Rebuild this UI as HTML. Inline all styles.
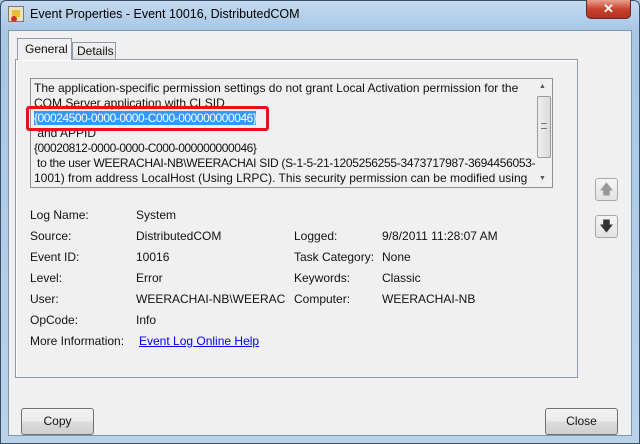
<!DOCTYPE html>
<html><head><style>
*{margin:0;padding:0;box-sizing:border-box}
body{width:640px;height:444px;overflow:hidden;background:#a9c6e2;font-family:"Liberation Sans",sans-serif;font-size:12px;color:#111;position:relative}
.frame{position:absolute;left:0;top:0;width:640px;height:444px;border:1px solid #3a4f66;border-radius:6px 6px 0 0;background:linear-gradient(180deg,#c3daf0 0,#a8c7e5 30px,#b9d2ea 100%)}
.abs{position:absolute;white-space:nowrap}
.client{position:absolute;left:8px;top:30px;width:624px;height:406px;background:#f0f0f0;border:1px solid #7d95ad}
.panel{position:absolute;left:15px;top:59px;width:563px;height:319px;border:1px solid #8e9aa6;background:#f0f0f0;box-shadow:inset 1px 1px 0 #fff}
.tab{position:absolute;border:1px solid #8e9aa6;border-bottom:none;background:linear-gradient(#f3f3f3,#e3e3e3)}
.box{position:absolute;left:30px;top:78px;width:523px;height:110px;border:1px solid #8f8f8f;background:#f0f0f0;overflow:hidden}
.sb{position:absolute;left:536px;top:79px;width:16px;height:108px;background:#f0f0f0}
.btn{position:absolute;border:1px solid #707070;border-radius:3px;background:linear-gradient(#f2f2f2 0,#ebebeb 50%,#dddddd 51%,#cfcfcf 100%);text-align:center;line-height:25px}
.ab{position:absolute;left:595px;width:23px;height:23px;border:1px solid #a8a8a8;border-radius:3px;background:linear-gradient(#f5f5f5,#e2e2e2)}
.g{letter-spacing:-0.45px}
</style></head><body>
<div class="frame"></div>
<div class="abs" style="left:8px;top:6px;width:16px;height:16px;background:#e8e0c8;border:1px solid #8a7a5a"><div style="position:absolute;left:3px;top:3px;width:8px;height:7px;background:#e8c030"></div><div style="position:absolute;left:2px;top:9px;width:6px;height:6px;border-radius:50%;background:#d03030"></div></div>
<div class="abs" style="left:30px;top:7px;font-size:12.5px;color:#000">Event Properties - Event 10016, DistributedCOM</div>
<div class="abs" style="left:586px;top:0;width:45px;height:19px;border:1px solid #5a2a2a;border-top:none;border-radius:0 0 5px 5px;background:linear-gradient(#e8a090,#c84430 50%,#b03020);color:#fff;text-align:center;font-weight:bold;font-size:13px;line-height:18px">✕</div>
<div class="client"></div>
<div class="panel"></div>
<div class="tab" style="left:17px;top:38px;width:55px;height:22px;background:#f0f0f0;z-index:2"><span class="abs" style="left:7px;top:3px">General</span></div>
<div class="tab" style="left:72px;top:42px;width:44px;height:17px"><span class="abs" style="left:4px;top:1px">Details</span></div>
<div class="box"></div>
<div class="abs" style="left:31px;top:79px;width:505px;height:108px;overflow:hidden">
<div class="abs" style="left:3px;top:2px;line-height:15px;color:#111">The application-specific permission settings do not grant Local Activation permission for the<br>COM Server application with CLSID<br><span class="g" style="background:#3399ff;color:#fff">{00024500-0000-0000-C000-000000000046}</span><br>&nbsp;and APPID<br><span class="g">{00020812-0000-0000-C000-000000000046}</span><br><span style="letter-spacing:-0.3px">&nbsp;to the user WEERACHAI-NB\WEERACHAI SID (S-1-5-21-1205256255-3473717987-3694456053-</span><br>1001) from address LocalHost (Using LRPC). This security permission can be modified using<br>the Component Services administrative tool.</div>
</div>
<div class="abs" style="left:26px;top:106px;width:243px;height:25px;border:3px solid #e8101a;border-radius:3px"></div>
<div class="sb"><div class="abs" style="left:3px;top:4px;font-size:7px;color:#555">▲</div><div class="abs" style="left:1px;top:17px;width:14px;height:62px;border:1px solid #9a9a9a;border-radius:2px;background:linear-gradient(90deg,#eee,#dcdcdc)"><div class="abs" style="left:3px;top:26px;width:6px;height:6px;border-top:1px solid #777;border-bottom:1px solid #777"></div></div><div class="abs" style="left:3px;top:96px;font-size:7px;color:#555">▼</div></div>
<div class="ab" style="top:178px;color:#999;font-size:14px;text-align:center;line-height:20px">🡅</div>
<div class="ab" style="top:215px;color:#333;font-size:14px;text-align:center;line-height:20px">🡇</div>
<div class="abs" style="left:30px;top:205px;line-height:21px">Log Name:<br>Source:<br>Event ID:<br>Level:<br>User:<br>OpCode:<br>More Information:</div>
<div class="abs" style="left:136px;top:205px;line-height:21px">System<br>DistributedCOM<br>10016<br>Error<br><span style="display:inline-block;width:150px;overflow:hidden;vertical-align:top">WEERACHAI-NB\WEERACHAI</span><br>Info<br><span style="color:#0000ee;text-decoration:underline;margin-left:3px">Event Log Online Help</span></div>
<div class="abs" style="left:294px;top:226px;line-height:21px">Logged:<br>Task Category:<br>Keywords:<br>Computer:</div>
<div class="abs" style="left:382px;top:226px;line-height:21px">9/8/2011 11:28:07 AM<br>None<br>Classic<br>WEERACHAI-NB</div>
<div class="btn" style="left:21px;top:408px;width:73px;height:27px">Copy</div>
<div class="btn" style="left:545px;top:408px;width:73px;height:27px">Close</div>
</body></html>
